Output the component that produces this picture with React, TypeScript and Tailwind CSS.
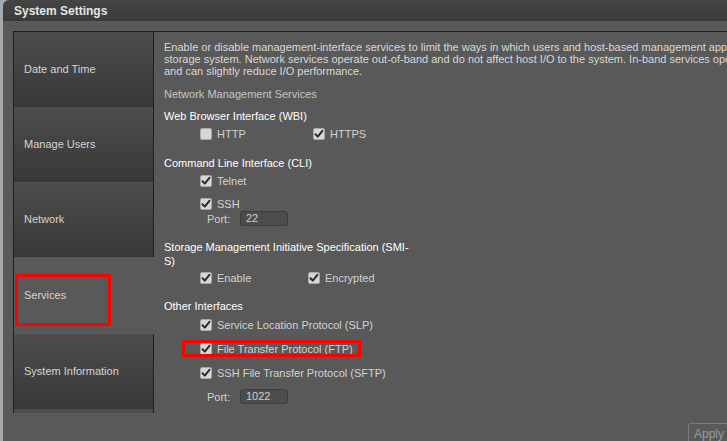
import React from "react";

const font = { fontFamily: '"Liberation Sans", Arial, sans-serif' };

function Check({ checked }: { checked: boolean }) {
  return (
    <span className="w-[12px] h-[12px] rounded-[2px] bg-[#d6d6d6] border border-[#a8a8a8] flex items-center justify-center shrink-0">
      {checked && (
        <svg width="10" height="10" viewBox="0 0 10 10">
          <path d="M1.5 5.2 L3.8 7.6 L8.4 1.8" stroke="#2b2b2b" strokeWidth="2" fill="none" strokeLinecap="round" strokeLinejoin="round" />
        </svg>
      )}
    </span>
  );
}

function Opt({ checked, label, className = "" }: { checked: boolean; label: string; className?: string }) {
  return (
    <div className={"flex items-center gap-[5px] h-[12px] " + className}>
      <Check checked={checked} />
      <span className="text-[#d2d2d2] leading-[12px] whitespace-nowrap">{label}</span>
    </div>
  );
}

function Port({ value, className = "" }: { value: string; className?: string }) {
  return (
    <div className={"flex items-center h-[15px] pl-[7px] " + className}>
      <span className="w-[33px] text-[#d2d2d2] leading-[12px]">Port:</span>
      <span className="w-[48px] h-[15px] rounded-[3px] bg-[#4c4c4c] border border-[#3c3c3c] text-[#cfcfcf] pl-[5px] leading-[13px]">{value}</span>
    </div>
  );
}

function NavItem({ label, selected = false, children }: { label: string; selected?: boolean; children?: React.ReactNode }) {
  return (
    <div
      className={
        "relative flex items-center pl-[10px] text-[#d4d4d4] whitespace-nowrap " +
        (selected ? "bg-[#595959] h-[77px]" : "h-[75px] bg-gradient-to-b from-[#4d4d4d] to-[#383838] border-r border-[#1f1f1f]")
      }
    >
      {label}
      {children}
    </div>
  );
}

export default function App() {
  return (
    <div className="w-[727px] h-[441px] overflow-hidden bg-[#a4a9ae] text-[11px]" style={font}>
      <div className="ml-[3px] h-[441px] rounded-tl-[6px] bg-[#595959] flex flex-col overflow-hidden">
        <div className="h-[21px] shrink-0 rounded-tl-[6px] bg-gradient-to-b from-[#454545] to-[#3a3a3a] flex items-center pl-[11px] text-[12px] font-bold text-[#e4e4e4]">
          System Settings
        </div>
        <div className="flex mt-[10px] ml-[10px] shrink-0">
          <div className="w-[141px] shrink-0 border-l border-t border-[#1f1f1f] flex flex-col">
            <NavItem label="Date and Time" />
            <NavItem label="Manage Users" />
            <NavItem label="Network" />
            <NavItem label="Services" selected>
              <div className="absolute left-[1px] top-[17px] w-[96px] h-[52px] border-[3px] border-[#ff0000]" />
            </NavItem>
            <NavItem label="System Information" />
            <div className="h-[4px] bg-[#4c4c4c] border-r border-[#1f1f1f]" />
          </div>
          <div className="flex-1 min-w-0 border-t border-[#1f1f1f] pl-[10px] pt-[9px] relative">
            <p className="leading-[12px] text-[#d8d8d8] whitespace-nowrap">
              Enable or disable management-interface services to limit the ways in which users and host-based management applications can access the
              <br />
              storage system. Network services operate out-of-band and do not affect host I/O to the system. In-band services operate through the host I/O ports
              <br />
              and can slightly reduce I/O performance.
            </p>
            <div className="mt-[11px] leading-[12px] text-[#c4c4c4]">Network Management Services</div>
            <div className="mt-[10px] leading-[12px] text-white">Web Browser Interface (WBI)</div>
            <div className="mt-[6px] flex pl-[36px]">
              <Opt checked={false} label="HTTP" className="w-[113px]" />
              <Opt checked label="HTTPS" />
            </div>
            <div className="mt-[17px] leading-[12px] text-white">Command Line Interface (CLI)</div>
            <Opt checked label="Telnet" className="mt-[6px] ml-[36px]" />
            <Opt checked label="SSH" className="mt-[11px] ml-[36px]" />
            <Port value="22" className="mt-[1px] ml-[36px]" />
            <div className="mt-[14px] w-[250px] leading-[14px] text-white">Storage Management Initiative Specification (SMI-S)</div>
            <div className="mt-[4px] flex pl-[36px]">
              <Opt checked label="Enable" className="w-[108px]" />
              <Opt checked label="Encrypted" />
            </div>
            <div className="mt-[16px] leading-[12px] text-white">Other Interfaces</div>
            <Opt checked label="Service Location Protocol (SLP)" className="mt-[7px] ml-[36px]" />
            <Opt checked label="File Transfer Protocol (FTP)" className="mt-[12px] ml-[36px]" />
            <Opt checked label="SSH File Transfer Protocol (SFTP)" className="mt-[12px] ml-[36px]" />
            <Port value="1022" className="mt-[10px] ml-[36px]" />
            <div className="absolute left-[28px] top-[308px] w-[179px] h-[17px] border-[3px] border-[#ff0000]" />
          </div>
        </div>
        <div className="flex pl-[685px] mt-[10px]">
          <div className="w-[50px] h-[20px] shrink-0 border border-[#7a7a7a] rounded-[2px] pl-[5px] pt-[3px] text-[12px] text-[#9a9a9a] leading-[14px]">Apply</div>
        </div>
      </div>
    </div>
  );
}
